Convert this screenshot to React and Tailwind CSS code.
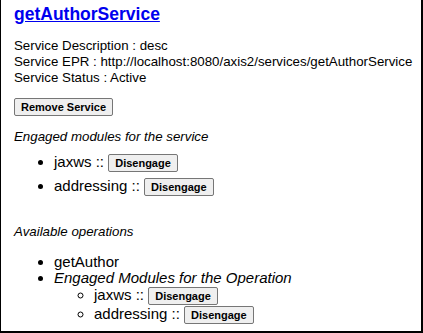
import React from "react";

function Btn({ children }) {
  return (
    <button className="h-[18px] px-[6px] border border-[#767676] bg-[#efefef] rounded-[2px] text-[11px] font-bold leading-none text-black align-middle">
      {children}
    </button>
  );
}

export default function App() {
  const serviceModules = ["jaxws", "addressing"];
  const opModules = ["jaxws", "addressing"];

  return (
    <div className="w-[423px] h-[333px] bg-white border-l border-r-2 border-b-2 border-black pl-[13px] pt-[4px] font-['Liberation_Sans',Arial,sans-serif] text-black text-[13.3px] leading-[16px] overflow-hidden whitespace-nowrap">
      <a href="#" className="block text-[17.5px] leading-[21px] font-bold text-[#0000ee] underline">
        getAuthorService
      </a>

      <div className="mt-[13px]">
        <div>Service Description : desc</div>
        <div>Service EPR : http://localhost:8080/axis2/services/getAuthorService</div>
        <div>Service Status : Active</div>
      </div>

      <div className="mt-[12px]">
        <Btn>Remove Service</Btn>
      </div>

      <p className="mt-[13px] italic">Engaged modules for the service</p>

      <ul className="mt-[5px] pl-[40px] list-disc text-[15px]">
        {serviceModules.map((m) => (
          <li key={m} className="leading-[24px]">
            {m} :: <Btn>Disengage</Btn>
          </li>
        ))}
      </ul>

      <p className="mt-[26px] italic">Available operations</p>

      <ul className="mt-[14px] pl-[40px] list-disc text-[15px] leading-[16px]">
        <li>getAuthor</li>
        <li>
          <i>Engaged Modules for the Operation</i>
          <ul className="pl-[40px] list-[circle]">
            {opModules.map((m) => (
              <li key={m} className="leading-[18px]">
                {m} :: <Btn>Disengage</Btn>
              </li>
            ))}
          </ul>
        </li>
      </ul>
    </div>
  );
}
